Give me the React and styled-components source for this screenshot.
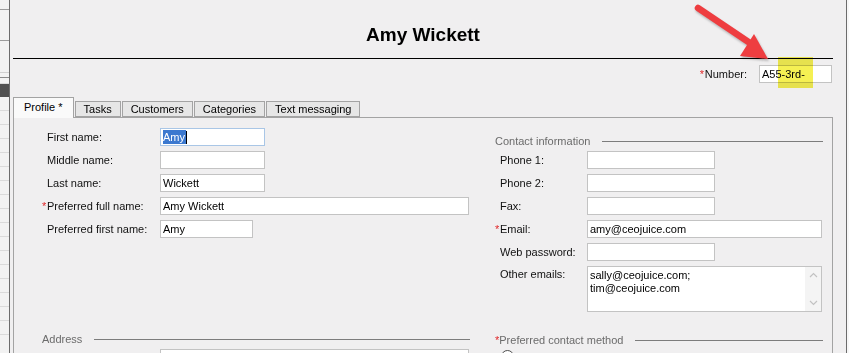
import React from "react";
import styled, { createGlobalStyle } from "styled-components";

const GlobalStyle = createGlobalStyle`
  html, body {
    margin: 0;
    padding: 0;
    background: #f0eff0;
    overflow: hidden;
  }
  * { box-sizing: border-box; }
`;

const Page = styled.div`
  position: relative;
  display: flex;
  width: 849px;
  height: 353px;
  overflow: hidden;
  background: #f0eff0;
  font-family: "Liberation Sans", Arial, sans-serif;
  font-size: 11px;
  color: #111;
`;

// window behind, peeking out on the left
const EdgeLeft = styled.div`
  width: 10px;
  flex-shrink: 0;
  display: flex;
  flex-direction: column;
  border-right: 1px solid #6c6c6c;
  background: #f2f2f2;
`;

const EdgeCell = styled.div`
  height: ${(p) => p.$h}px;
  flex-shrink: 0;
  background: ${(p) => p.$bg || "transparent"};
  border-bottom: 1px solid ${(p) => p.$line || "#dadada"};
`;

const EdgeRight = styled.div`
  width: 3px;
  flex-shrink: 0;
  border-left: 1px solid #6c6c6c;
  background: #f7f7f7;
`;

const Main = styled.div`
  flex: 1;
  display: flex;
  flex-direction: column;
  padding: 0 13px 0 3px;
  min-width: 0;

  & > * { flex-shrink: 0; }
`;

const Header = styled.div`
  height: 59px;
  padding-top: 24px;
  border-bottom: 1px solid #000;
  text-align: center;
  font-size: 19px;
  line-height: 22px;
  font-weight: 700;
  color: #000;
`;

const NumberRow = styled.div`
  display: flex;
  justify-content: flex-end;
  align-items: center;
  height: 18px;
  margin-top: 6px;
  padding-right: 1px;
  gap: 12px;
`;

const Req = styled.span`
  color: #e0282a;
  display: inline-block;
  width: 5px;
  margin-left: -5px;
`;

const TabBar = styled.div`
  display: flex;
  align-items: flex-end;
  gap: 1px;
  height: 20px;
  margin-top: 14px;
`;

const Tab = styled.div`
  position: relative;
  z-index: ${(p) => (p.$active ? 1 : 0)};
  height: ${(p) => (p.$active ? 21 : 16)}px;
  margin-bottom: ${(p) => (p.$active ? -1 : 0)}px;
  padding: 0 ${(p) => (p.$active ? 10 : 8)}px;
  border: 1px solid #a3a3a3;
  border-bottom: ${(p) => (p.$active ? "none" : "1px solid #a3a3a3")};
  background: ${(p) => (p.$active ? "#fafafa" : "#e6e6e6")};
  line-height: ${(p) => (p.$active ? 18 : 14)}px;
  color: #000;
  white-space: nowrap;
`;

const Panel = styled.div`
  flex: 1 0 auto;
  display: flex;
  gap: 25px;
  padding: 10px 9px 0 28px;
  border: 1px solid #a3a3a3;
  border-bottom: none;
`;

const Column = styled.div`
  width: ${(p) => p.$w}px;
  flex-shrink: 0;
  display: flex;
  flex-direction: column;
`;

const GroupHeader = styled.div`
  display: flex;
  align-items: center;
  gap: 12px;
  height: 14px;
  margin-top: ${(p) => p.$top || 0}px;
  margin-bottom: 3px;
  color: #6b6b6b;
  white-space: nowrap;

  &::after {
    content: "";
    flex: 1;
    border-top: 1px solid #7c7c7c;
  }
`;

const Row = styled.div`
  display: grid;
  grid-template-columns: ${(p) => p.$label}px auto;
  align-items: ${(p) => (p.$top ? "start" : "center")};
  min-height: 18px;
  margin-bottom: 5px;
`;

const Label = styled.div`
  padding-left: 5px;
  line-height: 16px;
  color: #111;
  white-space: nowrap;
`;

const Field = styled.div`
  width: ${(p) => p.$w}px;
  height: 18px;
  padding: 0 2px;
  background: #fff;
  border: 1px solid ${(p) => (p.$focus ? "#a9c6e6" : "#c3c3c3")};
  line-height: 16px;
  color: #000;
  white-space: nowrap;
  overflow: hidden;
  display: flex;
  align-items: center;
`;

const Selected = styled.span`
  background: #3b78cf;
  color: #fff;
  padding-right: 1px;
  line-height: 14px;
`;

const Caret = styled.span`
  width: 1px;
  height: 13px;
  background: #000;
`;

const Memo = styled.div`
  position: relative;
  width: 235px;
  height: 46px;
  padding: 2px 18px 0 2px;
  background: #fff;
  border: 1px solid #c3c3c3;
  line-height: 13px;
  color: #000;
`;

const MemoScroll = styled.div`
  position: absolute;
  top: 0;
  right: 0;
  bottom: 0;
  width: 16px;
  background: #f4f4f4;
  display: flex;
  flex-direction: column;
  justify-content: space-between;
  align-items: center;
  padding: 5px 0;
`;

const Radio = styled.div`
  width: 13px;
  height: 13px;
  margin-left: 6px;
  border-radius: 50%;
  border: 1px solid #4d4d4d;
  background: #fff;
`;

const Highlight = styled.div`
  position: absolute;
  left: 778px;
  top: 57px;
  width: 35px;
  height: 31px;
  background: rgba(242, 236, 40, 0.8);
  mix-blend-mode: multiply;
  pointer-events: none;
`;

const ArrowLayer = styled.svg`
  position: absolute;
  left: 680px;
  top: 0;
  overflow: visible;
  filter: drop-shadow(1px 2px 1px rgba(0, 0, 0, 0.25));
  pointer-events: none;
`;

const Chevron = ({ up }) => (
  <svg width="9" height="6" viewBox="0 0 9 6">
    <path
      d={up ? "M1 5 L4.5 1.5 L8 5" : "M1 1 L4.5 4.5 L8 1"}
      fill="none"
      stroke="#c2c2c2"
      strokeWidth="1.2"
    />
  </svg>
);

const leftRows = [
  { label: "First name:", w: 105, value: "Amy", focus: true },
  { label: "Middle name:", w: 105 },
  { label: "Last name:", w: 105, value: "Wickett" },
  { label: "Preferred full name:", w: 309, value: "Amy Wickett", required: true },
  { label: "Preferred first name:", w: 93, value: "Amy" },
];

const rightRows = [
  { label: "Phone 1:", w: 128 },
  { label: "Phone 2:", w: 128 },
  { label: "Fax:", w: 128 },
  { label: "Email:", w: 235, value: "amy@ceojuice.com", required: true },
  { label: "Web password:", w: 128 },
];

const tabs = ["Profile *", "Tasks", "Customers", "Categories", "Text messaging"];

const edgeCells = [
  { h: 10, line: "#9b9b9b" },
  { h: 31, line: "#9b9b9b" },
  { h: 32, line: "#d0d0d0" },
  { h: 5, line: "#8a8a8a" },
  { h: 6, line: "#dadada" },
  { h: 13, bg: "#505050", line: "#505050" },
  ...Array.from({ length: 17 }, () => ({ h: 14 })),
];

const FormRow = ({ row, labelW }) => (
  <Row $label={labelW}>
    <Label>
      {row.required && <Req>*</Req>}
      {row.label}
    </Label>
    <Field $w={row.w} $focus={row.focus}>
      {row.focus ? (
        <>
          <Selected>{row.value}</Selected>
          <Caret />
        </>
      ) : (
        row.value
      )}
    </Field>
  </Row>
);

export default function App() {
  return (
    <>
      <GlobalStyle />
      <Page>
        <EdgeLeft>
          {edgeCells.map((c, i) => (
            <EdgeCell key={i} $h={c.h} $bg={c.bg} $line={c.line} />
          ))}
        </EdgeLeft>

        <Main>
          <Header>Amy Wickett</Header>

          <NumberRow>
            <Label>
              <Req>*</Req>Number:
            </Label>
            <Field $w={73}>A55-3rd-</Field>
          </NumberRow>

          <TabBar>
            {tabs.map((t, i) => (
              <Tab key={t} $active={i === 0}>
                {t}
              </Tab>
            ))}
          </TabBar>

          <Panel>
            <Column $w={428}>
              {leftRows.map((r) => (
                <FormRow key={r.label} row={r} labelW={118} />
              ))}
              <GroupHeader $top={89}>Address</GroupHeader>
              <Row $label={118}>
                <Label />
                <Field $w={309} />
              </Row>
            </Column>

            <Column $w={328}>
              <GroupHeader $top={6}>Contact information</GroupHeader>
              {rightRows.map((r) => (
                <FormRow key={r.label} row={r} labelW={92} />
              ))}
              <Row $label={92} $top>
                <Label>Other emails:</Label>
                <Memo>
                  sally@ceojuice.com;
                  <br />
                  tim@ceojuice.com
                  <MemoScroll>
                    <Chevron up />
                    <Chevron />
                  </MemoScroll>
                </Memo>
              </Row>
              <GroupHeader $top={16}>
                <span>
                  <Req style={{ marginLeft: 0, width: "auto" }}>*</Req>Preferred contact method
                </span>
              </GroupHeader>
              <Radio />
            </Column>
          </Panel>
        </Main>

        <EdgeRight />

        <Highlight />
        <ArrowLayer width="100" height="70" viewBox="0 0 100 70">
          <line x1="18" y1="8" x2="70" y2="43" stroke="#ee3d40" strokeWidth="6.5" strokeLinecap="round" />
          <polygon points="88,59 60,56 74,34" fill="#ee3d40" />
        </ArrowLayer>
      </Page>
    </>
  );
}
